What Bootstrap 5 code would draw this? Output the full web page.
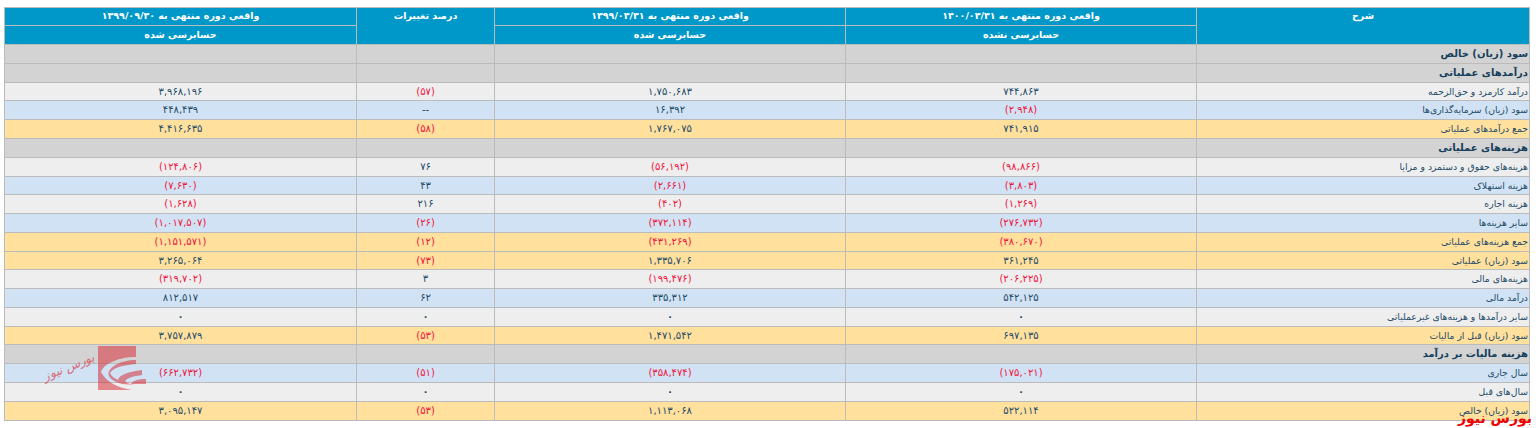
<!DOCTYPE html>
<html lang="fa" dir="rtl">
<head>
<meta charset="utf-8">
<title>صورت سود و زیان</title>
<link rel="stylesheet" href="https://cdn.jsdelivr.net/npm/bootstrap@5.3.0/dist/css/bootstrap.min.css">
<style>
html,body{background:#fff;height:428px;overflow:hidden}
.sheet{position:relative;padding:7px 6px 0 5px}
.fin{table-layout:fixed;width:1525px;height:414px;margin:0;border-collapse:collapse;font-family:"DejaVu Sans",sans-serif;font-size:10px;color:#1d4a68}
.fin tr{height:19px}
.fin tr.sh{height:18px}
.fin th,.fin td{border:1px solid #bbb;padding:0 2px;line-height:14px;text-align:center;vertical-align:middle;font-weight:400;background:transparent;color:inherit;box-shadow:none}
.fin thead th{background:#0098c9;color:#fff;font-weight:700;font-size:9.5px;vertical-align:top;padding-top:1px}
.fin thead tr.sub th{vertical-align:middle;padding-top:0}
.fin td:first-child{text-align:right;padding-right:1px;font-size:9.25px}
.fin .neg{color:#f0143c}
.fin tr.gr td{background:#eee}
.fin tr.bl td{background:#d0e2f3}
.fin tr.ye td{background:#ffe09d}
.fin tr.ti td{background:#d3d3d3}
.fin tr.ti td:first-child{font-weight:700;font-size:10px;color:#153f5c}
.mark-logo{position:absolute;left:98px;top:346px;width:48px;height:44px;opacity:.5}
.mark-script{position:absolute;left:42px;top:358px;font-family:"DejaVu Serif",serif;font-style:italic;font-size:12.5px;line-height:18px;color:#dc3c46;opacity:.7;transform:rotate(-22deg);white-space:nowrap}
.corner-brand{position:absolute;right:4px;top:410px;font-family:"DejaVu Sans",sans-serif;font-weight:700;font-size:14px;line-height:16px;color:#f00000;white-space:nowrap}
</style>
</head>
<body>
<div class="sheet">
<table class="table fin">
<colgroup><col style="width:333px"><col style="width:351px"><col style="width:351px"><col style="width:138px"><col style="width:352px"></colgroup>
<thead>
<tr class="sh"><th rowspan="2">شرح</th><th>واقعی دوره منتهی به ۱۴۰۰/۰۳/۳۱</th><th>واقعی دوره منتهی به ۱۳۹۹/۰۳/۳۱</th><th rowspan="2">درصد تغییرات</th><th>واقعی دوره منتهی به ۱۳۹۹/۰۹/۳۰</th></tr>
<tr class="sub"><th>حسابرسی نشده</th><th>حسابرسی شده</th><th>حسابرسی شده</th></tr>
</thead>
<tbody>
<tr class="ti"><td>سود (زیان) خالص</td><td></td><td></td><td></td><td></td></tr>
<tr class="ti"><td>درآمدهای عملیاتی</td><td></td><td></td><td></td><td></td></tr>
<tr class="gr sh"><td>درآمد کارمزد و حق‌الزحمه</td><td>۷۴۴,۸۶۳</td><td>۱,۷۵۰,۶۸۳</td><td class="neg">(۵۷)</td><td>۳,۹۶۸,۱۹۶</td></tr>
<tr class="bl"><td>سود (زیان) سرمایه‌گذاری‌ها</td><td class="neg">(۲,۹۴۸)</td><td>۱۶,۳۹۲</td><td>--</td><td>۴۴۸,۴۳۹</td></tr>
<tr class="ye"><td>جمع درآمدهای عملیاتی</td><td>۷۴۱,۹۱۵</td><td>۱,۷۶۷,۰۷۵</td><td class="neg">(۵۸)</td><td>۴,۴۱۶,۶۳۵</td></tr>
<tr class="ti"><td>هزینه‌های عملیاتی</td><td></td><td></td><td></td><td></td></tr>
<tr class="gr"><td>هزینه‌های حقوق و دستمزد و مزایا</td><td class="neg">(۹۸,۸۶۶)</td><td class="neg">(۵۶,۱۹۲)</td><td>۷۶</td><td class="neg">(۱۲۴,۸۰۶)</td></tr>
<tr class="bl sh"><td>هزینه استهلاک</td><td class="neg">(۳,۸۰۳)</td><td class="neg">(۲,۶۶۱)</td><td>۴۳</td><td class="neg">(۷,۶۳۰)</td></tr>
<tr class="gr"><td>هزینه اجاره</td><td class="neg">(۱,۲۶۹)</td><td class="neg">(۴۰۲)</td><td>۲۱۶</td><td class="neg">(۱,۶۲۸)</td></tr>
<tr class="bl"><td>سایر هزینه‌ها</td><td class="neg">(۲۷۶,۷۳۲)</td><td class="neg">(۳۷۲,۱۱۴)</td><td class="neg">(۲۶)</td><td class="neg">(۱,۰۱۷,۵۰۷)</td></tr>
<tr class="ye"><td>جمع هزینه‌های عملیاتی</td><td class="neg">(۳۸۰,۶۷۰)</td><td class="neg">(۴۳۱,۲۶۹)</td><td class="neg">(۱۲)</td><td class="neg">(۱,۱۵۱,۵۷۱)</td></tr>
<tr class="ye sh"><td>سود (زیان) عملیاتی</td><td>۳۶۱,۲۴۵</td><td>۱,۳۳۵,۷۰۶</td><td class="neg">(۷۳)</td><td>۳,۲۶۵,۰۶۴</td></tr>
<tr class="gr"><td>هزینه‌های مالی</td><td class="neg">(۲۰۶,۲۲۵)</td><td class="neg">(۱۹۹,۴۷۶)</td><td>۳</td><td class="neg">(۳۱۹,۷۰۲)</td></tr>
<tr class="bl"><td>درآمد مالی</td><td>۵۴۲,۱۲۵</td><td>۳۳۵,۳۱۲</td><td>۶۲</td><td>۸۱۲,۵۱۷</td></tr>
<tr class="gr"><td>سایر درآمدها و هزینه‌های غیرعملیاتی</td><td class="fw-bold">۰</td><td class="fw-bold">۰</td><td class="fw-bold">۰</td><td class="fw-bold">۰</td></tr>
<tr class="ye sh"><td>سود (زیان) قبل از مالیات</td><td>۶۹۷,۱۳۵</td><td>۱,۴۷۱,۵۴۲</td><td class="neg">(۵۳)</td><td>۳,۷۵۷,۸۷۹</td></tr>
<tr class="ti"><td>هزینه مالیات بر درآمد</td><td></td><td></td><td></td><td></td></tr>
<tr class="bl"><td>سال جاری</td><td class="neg">(۱۷۵,۰۲۱)</td><td class="neg">(۳۵۸,۴۷۴)</td><td class="neg">(۵۱)</td><td class="neg">(۶۶۲,۷۳۲)</td></tr>
<tr class="gr"><td>سال‌های قبل</td><td class="fw-bold">۰</td><td class="fw-bold">۰</td><td class="fw-bold">۰</td><td class="fw-bold">۰</td></tr>
<tr class="ye"><td>سود (زیان) خالص</td><td>۵۲۲,۱۱۴</td><td>۱,۱۱۳,۰۶۸</td><td class="neg">(۵۳)</td><td>۳,۰۹۵,۱۴۷</td></tr>
</tbody>
</table>
<svg class="mark-logo" viewBox="0 0 48 44" aria-hidden="true"><path fill="#d9232e" d="M0 0H38V11C22 11 6 17 3 26C8 36 20 42 34 44H0Z"/><path fill="#d9232e" d="M38 14V18C24 19 15 22 12 27C13 30 16 32 20 34C21 29 29 26 44 24V29C36 30 29 32 27 35C29 37 31 38 33 38C34 35 40 33 48 33V38H36C26 40 14 36 11 30C8 22 22 14 38 14Z"/></svg>
<div class="mark-script">بورس نیوز</div>
<div class="corner-brand">بورس نیوز</div>
</div>
<script src="https://cdn.jsdelivr.net/npm/bootstrap@5.3.0/dist/js/bootstrap.bundle.min.js"></script>
</body>
</html>
